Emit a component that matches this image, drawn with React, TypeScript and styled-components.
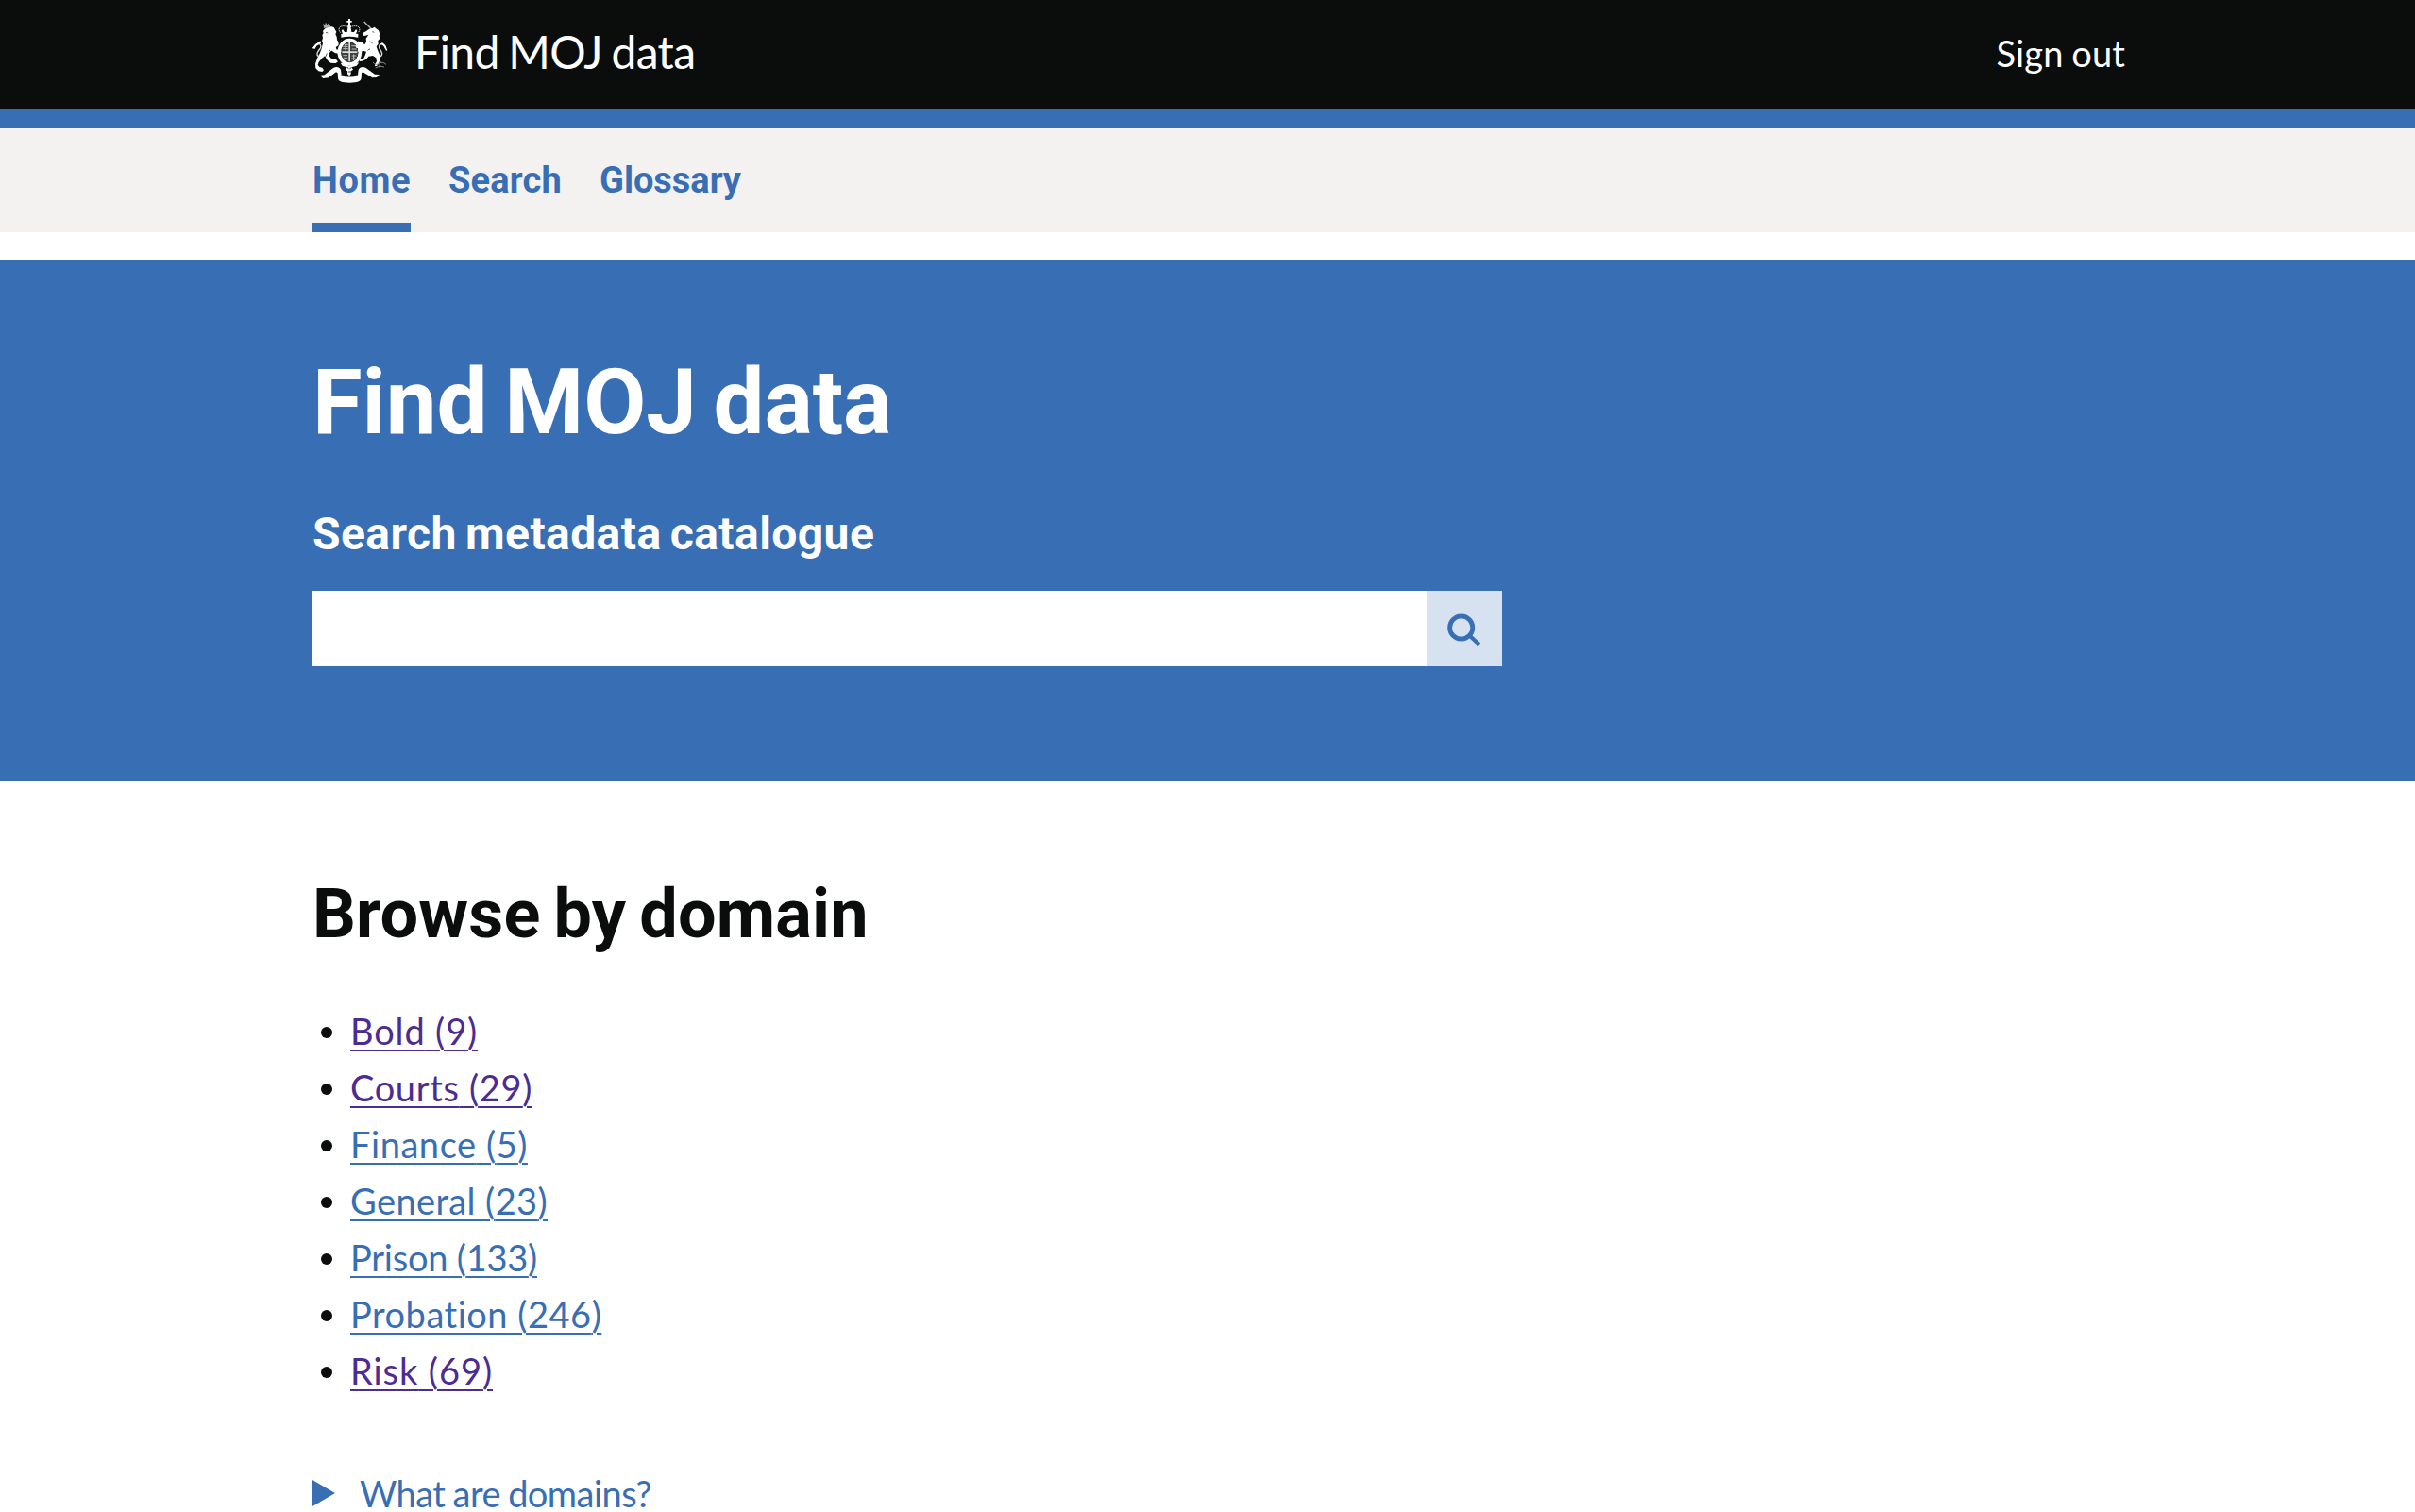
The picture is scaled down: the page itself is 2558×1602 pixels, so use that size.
import React from 'react';
import styled, { createGlobalStyle } from 'styled-components';

const BLUE = '#386eb4';
const INK = '#0b0c0c';
const VISITED = '#4c2c92';
const BODY_FONT = 'Lato, "Noto Sans", sans-serif';
const BOLD_FONT = 'Roboto, "Noto Sans", sans-serif';

const GlobalStyle = createGlobalStyle`
  *, *::before, *::after { box-sizing: border-box; }
  body {
    margin: 0;
    background: #fff;
    color: ${INK};
    font-family: ${BODY_FONT};
    -webkit-font-smoothing: antialiased;
  }
`;

const Page = styled.div`
  height: 1602px;
`;

const Header = styled.header`
  display: flex;
  align-items: flex-start;
  justify-content: space-between;
  height: 136px;
  padding: 19px 307px 0 330px;
  background: ${INK};
  border-bottom: 20px solid ${BLUE};
  color: #fff;
`;

const Brand = styled.a`
  display: flex;
  gap: 27px;
  color: inherit;
  text-decoration: none;
`;

const ServiceName = styled.span`
  margin-top: 6px;
  font-size: 48px;
  line-height: 60px;
  letter-spacing: -0.65px;
  word-spacing: -2px;
`;

const SignOut = styled.a`
  margin-top: 12px;
  color: inherit;
  font-size: 38px;
  line-height: 50px;
  letter-spacing: 0.1px;
  word-spacing: -1px;
  text-decoration: none;
`;

const Nav = styled.nav`
  display: flex;
  gap: 40px;
  height: 110px;
  padding: 30px 331px 0;
  background: #f3f2f1;
`;

const NavLink = styled.a<{ $active?: boolean; $tracking: number }>`
  height: 80px;
  border-bottom: 10px solid ${(p) => (p.$active ? BLUE : 'transparent')};
  color: ${BLUE};
  font: 700 38px/50px ${BOLD_FONT};
  letter-spacing: ${(p) => p.$tracking}px;
  text-decoration: none;
`;

const Hero = styled.section`
  height: 552px;
  margin-top: 30px;
  padding: 100px 331px 0;
  background: ${BLUE};
  color: #fff;
`;

const Title = styled.h1`
  margin: 0 0 60px;
  font: 700 96px/100px ${BOLD_FONT};
  letter-spacing: -0.12px;
  word-spacing: -6px;
`;

const SearchLabel = styled.label`
  display: block;
  margin-bottom: 30px;
  font: 700 48px/60px ${BOLD_FONT};
  letter-spacing: 0.42px;
  word-spacing: -3px;
`;

const SearchBar = styled.div`
  display: flex;
  width: 1260px;
  height: 80px;
`;

const SearchInput = styled.input`
  flex: 1;
  min-width: 0;
  padding: 10px;
  border: 0;
  border-radius: 0;
  background: #fff;
  font: 38px ${BODY_FONT};
  outline: none;
`;

const SearchButton = styled.button`
  display: grid;
  place-items: center;
  width: 80px;
  padding: 0;
  border: 0;
  background: #d7e2f0;
`;

const Main = styled.main`
  padding: 101px 331px 0;
`;

const SectionTitle = styled.h2`
  margin: 0 0 58px;
  font: 700 72px/80px ${BOLD_FONT};
  letter-spacing: 0.15px;
  word-spacing: -4px;
`;

const DomainList = styled.ul`
  display: flex;
  flex-direction: column;
  gap: 10px;
  margin: 0 0 85px;
  padding: 0 0 0 9px;
  list-style: none;
`;

const DomainItem = styled.li`
  display: flex;
  align-items: center;
  gap: 19px;
  height: 50px;
  font-size: 38px;
  line-height: 50px;

  &::before {
    content: '';
    width: 12px;
    height: 12px;
    margin-top: 3px;
    border-radius: 50%;
    background: ${INK};
  }
`;

const DomainLink = styled.a<{ $visited?: boolean; $tracking: number }>`
  color: ${(p) => (p.$visited ? VISITED : BLUE)};
  letter-spacing: ${(p) => p.$tracking}px;
  text-decoration: underline;
  text-decoration-thickness: 2px;
  text-underline-offset: 5px;
`;

const Summary = styled.div`
  display: flex;
  align-items: flex-start;
  gap: 26px;
  color: ${BLUE};
  font-size: 38px;
  line-height: 40px;
  letter-spacing: -0.55px;
  word-spacing: -1px;
`;

const Arrow = styled.span`
  width: 0;
  height: 0;
  margin-top: 6px;
  border-style: solid;
  border-color: transparent transparent transparent ${BLUE};
  border-width: 14px 0 14px 24px;
`;

const Crest = () => (
  <svg width="82" height="70" viewBox="60 57 246 210" fill="#fff" stroke="none" aria-hidden="true">
    {/* crown */}
    <path d="M177 60h6v6h5v5h-5v8h-6v-8h-5v-5h5z" />
    <path d="M152 104c-9-10-5-21 8-21 9 0 16 1 20 5 4-4 11-5 20-5 13 0 17 11 8 21" fill="none" stroke="#ddd" strokeWidth="3" strokeDasharray="4 2" />
    <path d="M176 82h8l3 20h8l6-9 4 5-5 11h-40l-5-11 4-5 6 9h8zM154 108q26-7 54 0v11q-28-6-54 0z" />
    <circle cx="180" cy="83" r="5" />
    {/* garter */}
    <ellipse cx="181" cy="166" rx="33" ry="38" fill="none" stroke="#fff" strokeWidth="11" />
    <ellipse cx="181" cy="166" rx="27" ry="32" fill="#3d3e3e" />
    <path d="M178 135h5v61h-5zM157 163h48v5h-48z" fill="#ddd" />
    <path d="M160 148h16M160 155h16M164 142h12M187 146h14M188 156h15M160 176h14M161 184h14M188 177h14M187 186h12M168 140v20M194 172v20" stroke="#bbb" strokeWidth="3" fill="none" />
    {/* lion */}
    <path d="M97 74l5 6 3-9 4 8 6-6 1 8 5-3-3 11H99z" fill="#aaa" />
    <path d="M104 90l14-4c8-3 14 0 16 7l5 8-3 8 4 8 1 10c5 6 6 12 4 18l-8 5 3 8 10-2 5 7-6 7-13-1-12-8-8 8 1 10 8 9 13 1 6 7-7 5-16-1-10-8-9-14-9 7-10 12-3 9 5 7 9 2 5 8-5 5-12-2-9-9-1-14 6-18 8-15 6-16 4-16-3-8 3-10-2-8 4-7-2-7z" />
    <path d="M83 180c-12-8-1-18 5-27 5-9-2-17-11-13-6 3-8 8-8 13" fill="none" stroke="#ddd" strokeWidth="4" />
    <path d="M62 153l12-13 14-10 2 7-14 9-6 10z" />
    <path d="M105 103l7 2M116 157l8 11M104 181l5-12" stroke={INK} strokeWidth="2" />
    {/* unicorn */}
    <path d="M227 69l25 25" stroke="#bbb" strokeWidth="4" />
    <path d="M243 92l12-3 5-3 4 4 9 7 4 10-2 8 3 7-7 7 1 11-6 8 4 12 6 13 2 17-4 10-6 9-7 2 1-7 5-9-2-11-10-7-14 2-7 9-13 6-9 1v-5l13-4 5-10 4-12-10-3-12 6-6-6 10-9-13 1-4-7 12-6-7-3 3-6 12 2 10 9 5-9-1-11 8-11-14 3-5-4 2-6 10-5z" />
    <path d="M277 181c14-8 4-18-1-27-4-9 2-16 11-13 6 2 8 6 9 13" fill="none" stroke="#ddd" strokeWidth="4" />
    <path d="M301 160l-7-16-9-9-5 4 10 9 7 13z" />
    <path d="M253 101l6 2M246 131l8 8M238 160l8-5" stroke={INK} strokeWidth="2" />
    <path d="M255 198q10 12 20 4t22 3M263 216l14-6 14 3M280 196l-6 18" fill="none" stroke="#888" strokeWidth="3" />
    {/* plant and buckle */}
    <path d="M152 200l16 2 12 8 14-8 17-3-8 10-16 5 5 7-7 5v9l-5 6-6-6v-9l-7-5 5-7-14-5z" />
    <path d="M172 214l6 3M186 214l-5 6M176 228h9" stroke={INK} strokeWidth="2.5" />
    {/* motto ribbon */}
    <path d="M87 240l14-2 28-22c10-6 20-3 24 6l2 16q25 10 52 0l2-16c4-9 14-12 24-6l28 20 15 1-9 9-14 1-30-18-4 3-1 17c-1 9-12 14-37 14s-36-5-37-14l-1-17-5-3-24 18-17 2z" />
    <path d="M154 239q27 10 54 0" fill="none" stroke={INK} strokeWidth="2" />
  </svg>
);

const SearchIcon = () => (
  <svg width="80" height="80" viewBox="0 0 80 80" fill="none" stroke={BLUE} aria-hidden="true">
    <circle cx="36.7" cy="39" r="12.1" strokeWidth="4.8" />
    <path d="M45.5 47.5L55.8 57" strokeWidth="4.2" strokeLinecap="butt" />
  </svg>
);

const domains = [
  { name: 'Bold', count: 9, visited: true, tracking: 0.86 },
  { name: 'Courts', count: 29, visited: true, tracking: 0.66 },
  { name: 'Finance', count: 5, tracking: 0.56 },
  { name: 'General', count: 23, tracking: 0.39 },
  { name: 'Prison', count: 133, tracking: -0.23 },
  { name: 'Probation', count: 246, tracking: 0.51 },
  { name: 'Risk', count: 69, visited: true, tracking: 0.94 },
];

export default function App() {
  return (
    <Page>
      <GlobalStyle />
      <Header>
        <Brand>
          <Crest />
          <ServiceName>Find MOJ data</ServiceName>
        </Brand>
        <SignOut>Sign out</SignOut>
      </Header>
      <Nav>
        <NavLink $active $tracking={0.58}>Home</NavLink>
        <NavLink $tracking={0.18}>Search</NavLink>
        <NavLink $tracking={-0.03}>Glossary</NavLink>
      </Nav>
      <Hero>
        <Title>Find MOJ data</Title>
        <SearchLabel htmlFor="search">Search metadata catalogue</SearchLabel>
        <SearchBar>
          <SearchInput id="search" type="text" />
          <SearchButton aria-label="Search">
            <SearchIcon />
          </SearchButton>
        </SearchBar>
      </Hero>
      <Main>
        <SectionTitle>Browse by domain</SectionTitle>
        <DomainList>
          {domains.map((d) => (
            <DomainItem key={d.name}>
              <DomainLink $visited={d.visited} $tracking={d.tracking}>
                {d.name} ({d.count})
              </DomainLink>
            </DomainItem>
          ))}
        </DomainList>
        <Summary>
          <Arrow />
          What are domains?
        </Summary>
      </Main>
    </Page>
  );
}
